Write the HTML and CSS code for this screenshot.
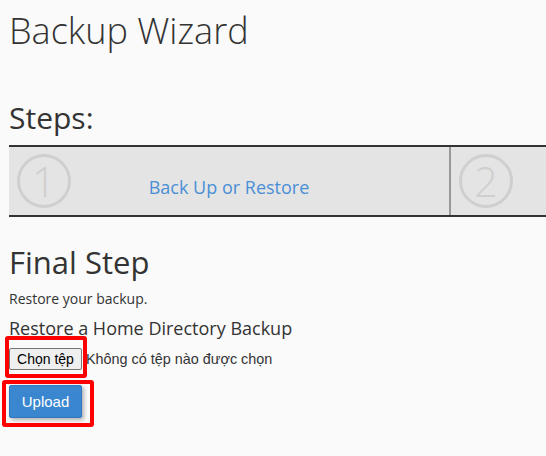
FILE: index.html
```html
<!DOCTYPE html>
<html lang="vi">
<head>
<meta charset="utf-8">
<title>Backup Wizard</title>
<link rel="stylesheet" href="styles.css">
</head>
<body>
<div class="page">
  <h1 class="title">Backup Wizard</h1>
  <h2 class="steps-title">Steps:</h2>
  <div class="steps">
    <div class="step">
      <div class="step-num">1</div>
      <a class="step-link" href="#">Back Up or Restore</a>
    </div>
    <div class="step">
      <div class="step-num">2</div>
      <span class="step-link"></span>
    </div>
  </div>
  <h3 class="final-title">Final Step</h3>
  <p class="desc">Restore your backup.</p>
  <h4 class="sub-title">Restore a Home Directory Backup</h4>
  <div class="file-row">
    <span class="annotated">
      <button class="file-btn" type="button">Chọn tệp</button>
      <span class="callout callout-file"></span>
    </span>
    <span class="file-label">Không có tệp nào được chọn</span>
  </div>
  <div class="upload-row">
    <span class="annotated">
      <button class="upload-btn" type="button">Upload</button>
      <span class="callout callout-upload"></span>
    </span>
  </div>
</div>
</body>
</html>
```
FILE: styles.css
```css
html, body {
  margin: 0;
  padding: 0;
}
body {
  background: #fafafa;
  color: #333;
  font-family: "Open Sans", "Liberation Sans", sans-serif;
}
.page {
  padding: 0 0 30px 9px;
}
.title {
  margin: 11px 0 0;
  font-size: 36px;
  line-height: 40px;
  font-weight: 300;
}
.steps-title {
  margin: 50px 0 0;
  font-size: 30px;
  line-height: 34px;
  font-weight: 500;
}
.steps {
  margin-top: 10px;
  display: flex;
  overflow: hidden;
  background: #e4e4e4;
  border-top: 2px solid #333;
  border-bottom: 2px solid #333;
}
.step {
  flex: 0 0 440px;
  height: 68px;
  display: grid;
  align-items: center;
}
.step + .step {
  border-left: 2px solid #999;
}
.step-num {
  grid-area: 1 / 1;
  justify-self: start;
  margin-left: 8px;
  width: 48px;
  height: 48px;
  border: 3px solid #cfcfcf;
  border-radius: 50%;
  color: #cfcfcf;
  font-family: "Open Sans", sans-serif;
  font-weight: 300;
  font-size: 42px;
  line-height: 48px;
  text-align: center;
}
.step-link {
  grid-area: 1 / 1;
  justify-self: center;
  padding-top: 11px;
  color: #4a8fd6;
  text-decoration: none;
  font-size: 18px;
}
.final-title {
  margin: 28px 0 0;
  font-size: 31px;
  line-height: 34px;
  font-weight: 500;
}
.desc {
  margin: 10px 0 0;
  font-size: 14px;
  line-height: 20px;
}
.sub-title {
  margin: 7px 0 0;
  font-size: 18px;
  line-height: 24px;
  font-weight: 500;
}
.file-row {
  margin-top: 8px;
  display: flex;
  align-items: center;
  gap: 4px;
  font-family: "Liberation Sans", Arial, sans-serif;
  font-size: 14.4px;
}
.annotated {
  position: relative;
  display: inline-flex;
}
.file-btn {
  box-sizing: border-box;
  height: 22px;
  width: 73px;
  padding: 0;
  background: #efefef;
  border: 1px solid #767676;
  border-radius: 2px;
  color: #000;
  font-family: "Liberation Sans", Arial, sans-serif;
  font-size: 14px;
}
.file-label {
  color: #333;
}
.upload-row {
  margin-top: 15px;
  display: flex;
}
.upload-btn {
  box-sizing: border-box;
  width: 73px;
  height: 33px;
  padding: 0;
  background: #3a87cf;
  border: 1px solid #3278bd;
  border-radius: 2px;
  color: #fff;
  font-family: "Liberation Sans", Arial, sans-serif;
  font-size: 15px;
  box-shadow: 2px 2px 4px rgba(0, 0, 0, 0.3);
}
.callout {
  position: absolute;
  border: 4px solid #ff0000;
  border-radius: 3px;
  pointer-events: none;
}
.callout-file {
  left: -4px;
  top: -12px;
  right: -5px;
  bottom: -8px;
}
.callout-upload {
  left: -7px;
  top: -5px;
  right: -12px;
  bottom: -9px;
}
```
